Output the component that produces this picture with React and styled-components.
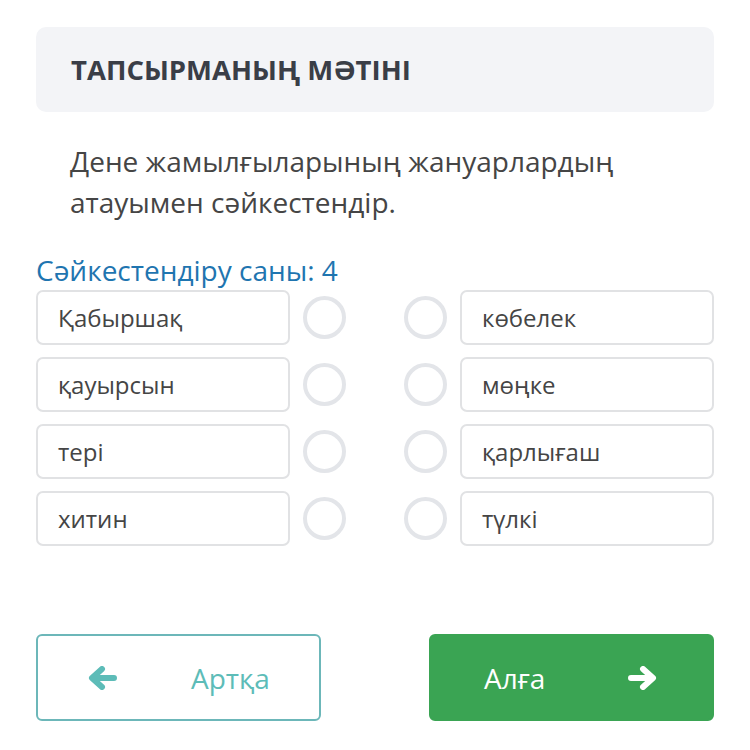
import React from 'react';
import styled, {createGlobalStyle} from 'styled-components';

const GlobalStyle = createGlobalStyle`
  body {
    margin: 0;
    background: #fff;
    font-family: "Open Sans", "Noto Sans", sans-serif;
  }
`

const Page = styled('div')`
  width: 750px;
  height: 750px;
  box-sizing: border-box;
  padding: 27px 36px 0 36px;
  display: flex;
  flex-direction: column;
`

const Header = styled('div')`
  height: 85px;
  background: #f3f4f7;
  border-radius: 10px;
  display: flex;
  align-items: center;
  padding-left: 35px;
`

const HeaderTitle = styled('h2')`
  margin: 0;
  font-size: 27.5px;
  font-weight: 700;
  color: #3a3e47;
`

const Question = styled('p')`
  margin: 29px 0 0 34px;
  font-size: 28px;
  line-height: 41px;
  color: #454545;
`

const Count = styled('div')`
  margin-top: 31px;
  font-size: 28px;
  line-height: 32px;
  color: #1f75b0;
`

const Rows = styled('div')`
  margin-top: 4px;
  display: flex;
  flex-direction: column;
  gap: 12px;
`

const Row = styled('div')`
  display: flex;
  align-items: center;
  height: 55px;
`

const Item = styled('div')`
  width: 254px;
  height: 55px;
  box-sizing: border-box;
  border: 2px solid #e1e2e4;
  border-radius: 7px;
  display: flex;
  align-items: center;
  padding-left: 20px;
  font-size: 24px;
  color: #454545;
`

const Dot = styled('div')`
  width: 43px;
  height: 43px;
  box-sizing: border-box;
  border: 4px solid #e3e5e9;
  border-radius: 50%;
  margin: ${p => p.$side === 'left' ? '0 0 0 13px' : '0 13px 0 0'};
`

const Spacer = styled('div')`
  flex: 1;
`

const Footer = styled('div')`
  margin-top: auto;
  margin-bottom: 29px;
  display: flex;
  justify-content: space-between;
`

const NavButton = styled('button')`
  width: 285px;
  height: 87px;
  box-sizing: border-box;
  border-radius: 6px;
  border: 2px solid ${p => p.$primary ? '#3aa453' : '#6cb7b9'};
  background: ${p => p.$primary ? '#3aa453' : '#fff'};
  color: ${p => p.$primary ? '#fff' : '#5dbcb8'};
  font-family: "Open Sans", "Noto Sans", sans-serif;
  font-size: 28px;
  display: flex;
  align-items: center;
  padding: 0;
  cursor: pointer;
`

const ButtonIcon = styled('svg')`
  width: 30px;
  height: 24px;
  flex-shrink: 0;
  margin: ${p => p.$right ? '0 54px 0 auto' : '0 0 0 49px'};
`

const ButtonText = styled('span')`
  margin-left: ${p => p.$left}px;
`

const Arrow = ({right}) => (
  <ButtonIcon $right={right} viewBox="0 0 30 24">
    <path
      d={right ? 'M3 12H24M15 3L25 12L15 21' : 'M27 12H6M15 3L5 12L15 21'}
      fill="none"
      stroke="currentColor"
      strokeWidth="6"
      strokeLinecap="round"
      strokeLinejoin="round"
    />
  </ButtonIcon>
)

const pairs = [
  ['Қабыршақ', 'көбелек'],
  ['қауырсын', 'мөңке'],
  ['тері', 'қарлығаш'],
  ['хитин', 'түлкі'],
]

export default function App() {
  return (
    <>
      <GlobalStyle />
      <Page>
        <Header>
          <HeaderTitle>ТАПСЫРМАНЫҢ МӘТІНІ</HeaderTitle>
        </Header>
        <Question>Дене жамылғыларының жануарлардың атауымен сәйкестендір.</Question>
        <Count>Сәйкестендіру саны: 4</Count>
        <Rows>
          {pairs.map(([a, b]) => (
            <Row key={a}>
              <Item>{a}</Item>
              <Dot $side="left" />
              <Spacer />
              <Dot $side="right" />
              <Item>{b}</Item>
            </Row>
          ))}
        </Rows>
        <Footer>
          <NavButton>
            <Arrow />
            <ButtonText $left={74}>Артқа</ButtonText>
          </NavButton>
          <NavButton $primary>
            <ButtonText $left={53}>Алға</ButtonText>
            <Arrow right />
          </NavButton>
        </Footer>
      </Page>
    </>
  );
}
